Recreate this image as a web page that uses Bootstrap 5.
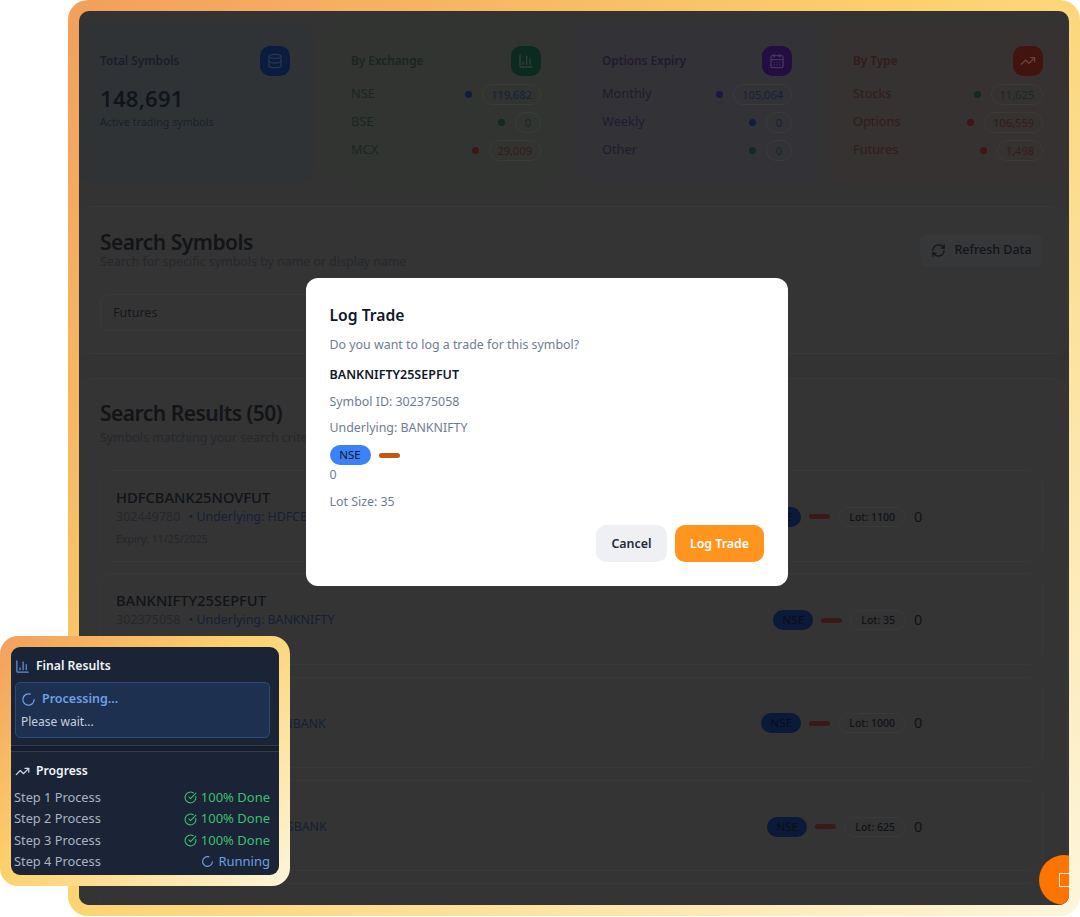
<!DOCTYPE html>
<html lang="en">
<head>
  <meta charset="UTF-8" />
  <meta name="viewport" content="width=device-width, initial-scale=1.0"/>
  <title>Symbols</title>
  <link href="https://cdn.jsdelivr.net/npm/bootstrap@5.3.3/dist/css/bootstrap.min.css" rel="stylesheet">
  <style>
    html, body { height: 917px; overflow: hidden; background: #fff; }
    body { font-family: "Noto Sans", "Liberation Sans", sans-serif; font-size: 14px; position: relative; }
    .ico { fill: none; stroke: currentColor; stroke-width: 2; stroke-linecap: round; stroke-linejoin: round; flex: none; }

    .frame { margin-left: 68px; width: 1012px; height: 916px; padding: 11px; border-radius: 20px;
      background: linear-gradient(135deg, #f29f5c 0%, #fbd26d 45%, #fdf6dc 100%); }
    .screen { position: relative; height: 100%; background: #333; border-radius: 10px; overflow: hidden; }
    .wrap { margin: 12px 1px 0 -3px; }

    .stats { display: grid; grid-template-columns: repeat(4, 238px); gap: 13px; }
    .stat { height: 160px; padding: 23px 24px; border-radius: 16px; }
    .stat-blue { background: #303336; color: #1a1d2c; }
    .stat-green { background: #313431; color: #1b2522; }
    .stat-purple { background: #333236; color: #221a30; }
    .stat-red { background: #353231; color: #331c1b; }
    .stat-title { font-size: 11.8px; font-weight: 600; }
    .stat-icon { width: 30px; height: 30px; border-radius: 10px; }
    .stat-head { height: 30px; margin-bottom: 4px; }
    .total { font-size: 22px; font-weight: 600; line-height: 28px; color: #10151d; margin-top: 8px; letter-spacing: .3px; }
    .total-sub { font-size: 10.7px; line-height: 16px; color: #1a1f2e; margin-top: 2px; }
    .stat-row { height: 28px; font-size: 12.8px; }
    .stat-dot { width: 7px; height: 7px; border-radius: 50%; margin-right: 10px; }
    .stat-pill { min-width: 26px; height: 21px; padding: 0 8px; border: 1px solid rgba(255,255,255,.04); border-radius: 11px;
      font-size: 11px; line-height: 19px; text-align: center; }
    .tone-blue { color: #15203a; }
    .tone-green { color: #152a24; }
    .tone-red { color: #381a19; }
    .dot-blue { background: #101d3c; }
    .dot-green { background: #122a22; }
    .dot-red { background: #3e1614; }
    .dot-purple { background: #241540; }

    .panel-box { border: 1px solid #383838; border-radius: 14px; background: #343434; padding: 23px 24px 23px 23px; }
    .search-box { height: 148px; margin-top: 23px; }
    .results-box { margin-top: 24px; height: 560px; padding-top: 22px; }
    .heading { font-size: 21px; line-height: 24px; font-weight: 600; color: #121418; margin: 0; letter-spacing: -.5px; }
    .sub-heading { font-size: 12.4px; line-height: 14px; color: #25282d; }
    .refresh-btn { height: 33px; width: 123px; margin-top: 4px; border-radius: 8px; background: #363738; color: #111418; font-size: 12.5px; font-weight: 500; }
    .fake-select { width: 320px; height: 37px; margin-top: 25px; padding: 0 12px; border: 1px solid #393939; border-radius: 8px; font-size: 12.5px; line-height: 35px; color: #15181d; }

    .result { height: 91.5px; padding: 16px 119px 16px 15px; margin-bottom: 11.8px; border: 1px solid #383838; border-radius: 12px; }
    .result-name { font-size: 14.7px; line-height: 20px; font-weight: 500; color: #101318; }
    .result-meta { font-size: 12.5px; line-height: 20px; color: #24272c; }
    .result-under { font-size: 12.4px; color: #161f36; margin-left: 5px; }
    .result-expiry { font-size: 10.5px; line-height: 16px; margin-top: 4px; color: #24272c; }
    .result-tags { margin-top: 2px; }
    .nse-dark { height: 20px; width: 40px; border-radius: 10px; background: #0b1a38; color: #0a0d14; font-size: 11.5px; line-height: 20px; text-align: center; }
    .dash-dark { width: 21px; height: 5px; border-radius: 3px; background: #381a18; }
    .lot-pill { height: 20px; padding: 0 10px; border: 1px solid #3a3a3a; border-radius: 10px; font-size: 10.5px; line-height: 18px; font-weight: 500; color: #101318; }
    .zero { font-size: 14.5px; color: #101318; width: 9px; }

    .fab { position: absolute; right: -20px; bottom: 0; width: 50px; height: 50px; border-radius: 50%; background: #ff7300; }
    .fab-square { position: absolute; left: 20px; top: 18px; width: 14px; height: 14px; border: 1.5px solid #ffe9d6; }

    .dialog { position: absolute; left: 227px; top: 267px; width: 482px; height: 308px; padding: 24px 24px 24px 23.5px; background: #fff; border-radius: 12px; }
    .dialog-title { font-size: 15.7px; line-height: 26px; font-weight: 600; color: #0f172a; margin: 0; }
    .dialog-text { font-size: 12.4px; line-height: 20px; color: #6f7d92; }
    .dialog-symbol { font-size: 12.5px; line-height: 20px; font-weight: 600; color: #0f172a; margin-top: 10px; }
    .nse-bright { width: 41px; height: 20px; border-radius: 10px; background: #3b82f6; color: #0f172a; font-size: 11.5px; line-height: 20px; text-align: center; }
    .dash-bright { width: 21px; height: 5px; margin-left: 8px; border-radius: 3px; background: #c2590f; }
    .dialog-btn { height: 37px; border-radius: 10px; font-size: 12.4px; font-weight: 600; line-height: 37px; text-align: center; }
    .dialog-cancel { width: 71px; background: #eef0f3; color: #1e293b; }
    .dialog-log { width: 89px; background: #ff951f; color: #fff; }

    .float-wrap { position: absolute; left: 0; top: 636px; width: 290px; height: 250px; padding: 11px; border-radius: 18px;
      background: linear-gradient(135deg, #f29f5c 0%, #fbd26d 45%, #fdf6dc 100%); }
    .float-panel { height: 228px; padding: 10px 9px 0 3px; border-radius: 9px; background: #1a2436; overflow: hidden; }
    .float-title { font-size: 12.2px; line-height: 18px; font-weight: 600; color: #f1f5f9; }
    .float-box { height: 56px; margin: 7px 0 0 1px; padding: 6px 5px; border: 1px solid #2b4a7d; border-radius: 5px; background: #1e3050; }
    .float-proc { font-size: 12.5px; line-height: 20px; font-weight: 600; color: #6f9fe5; }
    .float-wait { font-size: 12px; line-height: 18px; margin-top: 4px; color: #c5cfdc; }
    .float-rule { height: 7px; margin: 7px -9px 0 -3px; border-top: 1px solid #323c4d; border-bottom: 1px solid #323c4d; background: #161e2d; }
    .float-step { height: 21.4px; font-size: 12.8px; color: #a9b4c2; }
    .step-done { color: #3fbf6f; font-size: 13px; }
    .step-run { color: #6f9fe5; font-size: 13px; }
  </style>
</head>
<body>

  <svg width="0" height="0" class="position-absolute">
    <symbol id="i-db" viewBox="0 0 24 24"><ellipse cx="12" cy="5" rx="9" ry="3"/><path d="M3 5V19A9 3 0 0 0 21 19V5"/><path d="M3 12A9 3 0 0 0 21 12"/></symbol>
    <symbol id="i-chart" viewBox="0 0 24 24"><path d="M3 3v16a2 2 0 0 0 2 2h16"/><path d="M18 17V9"/><path d="M13 17V5"/><path d="M8 17v-3"/></symbol>
    <symbol id="i-cal" viewBox="0 0 24 24"><path d="M8 2v4"/><path d="M16 2v4"/><rect x="3" y="4" width="18" height="18" rx="2"/><path d="M3 10h18"/><path d="M8 14h.01"/><path d="M12 14h.01"/><path d="M16 14h.01"/><path d="M8 18h.01"/><path d="M12 18h.01"/><path d="M16 18h.01"/></symbol>
    <symbol id="i-trend" viewBox="0 0 24 24"><polyline points="22 7 13.5 15.5 8.5 10.5 2 17"/><polyline points="16 7 22 7 22 13"/></symbol>
    <symbol id="i-refresh" viewBox="0 0 24 24"><path d="M3 12a9 9 0 0 1 9-9 9.75 9.75 0 0 1 6.74 2.74L21 8"/><path d="M21 3v5h-5"/><path d="M21 12a9 9 0 0 1-9 9 9.75 9.75 0 0 1-6.74-2.74L3 16"/><path d="M8 16H3v5"/></symbol>
    <symbol id="i-check" viewBox="0 0 24 24"><path d="M21.8 10A10 10 0 1 1 17 3.34"/><path d="m9 11 3 3L22 4"/></symbol>
    <symbol id="i-load" viewBox="0 0 24 24"><path d="M21 12a9 9 0 1 1-6.22-8.56"/></symbol>
  </svg>

  <div class="frame">
    <div class="screen">
      <div class="wrap">

        <div class="stats">
          <div class="stat stat-blue">
            <div class="stat-head d-flex justify-content-between align-items-center">
              <span class="stat-title">Total Symbols</span>
              <span class="stat-icon d-flex align-items-center justify-content-center" style="background:#0b1c3e;color:#26364f"><svg class="ico" width="16" height="16"><use href="#i-db"/></svg></span>
            </div>
            <div class="total">148,691</div>
            <div class="total-sub">Active trading symbols</div>
          </div>

          <div class="stat stat-green">
            <div class="stat-head d-flex justify-content-between align-items-center">
              <span class="stat-title">By Exchange</span>
              <span class="stat-icon d-flex align-items-center justify-content-center" style="background:#0d2a20;color:#29423a"><svg class="ico" width="16" height="16"><use href="#i-chart"/></svg></span>
            </div>
            <div class="stat-row d-flex align-items-center"><span class="me-auto">NSE</span><span class="stat-dot dot-blue"></span><span class="stat-pill tone-blue">119,682</span></div>
            <div class="stat-row d-flex align-items-center"><span class="me-auto">BSE</span><span class="stat-dot dot-green"></span><span class="stat-pill tone-green">0</span></div>
            <div class="stat-row d-flex align-items-center"><span class="me-auto">MCX</span><span class="stat-dot dot-red"></span><span class="stat-pill tone-red">29,009</span></div>
          </div>

          <div class="stat stat-purple">
            <div class="stat-head d-flex justify-content-between align-items-center">
              <span class="stat-title">Options Expiry</span>
              <span class="stat-icon d-flex align-items-center justify-content-center" style="background:#220e40;color:#443560"><svg class="ico" width="16" height="16"><use href="#i-cal"/></svg></span>
            </div>
            <div class="stat-row d-flex align-items-center"><span class="me-auto">Monthly</span><span class="stat-dot dot-purple"></span><span class="stat-pill tone-blue">105,064</span></div>
            <div class="stat-row d-flex align-items-center"><span class="me-auto">Weekly</span><span class="stat-dot dot-blue"></span><span class="stat-pill tone-blue">0</span></div>
            <div class="stat-row d-flex align-items-center"><span class="me-auto">Other</span><span class="stat-dot dot-green"></span><span class="stat-pill tone-green">0</span></div>
          </div>

          <div class="stat stat-red">
            <div class="stat-head d-flex justify-content-between align-items-center">
              <span class="stat-title">By Type</span>
              <span class="stat-icon d-flex align-items-center justify-content-center" style="background:#421410;color:#6a4038"><svg class="ico" width="16" height="16"><use href="#i-trend"/></svg></span>
            </div>
            <div class="stat-row d-flex align-items-center"><span class="me-auto">Stocks</span><span class="stat-dot dot-green"></span><span class="stat-pill tone-green">11,625</span></div>
            <div class="stat-row d-flex align-items-center"><span class="me-auto">Options</span><span class="stat-dot dot-red"></span><span class="stat-pill tone-red">106,559</span></div>
            <div class="stat-row d-flex align-items-center"><span class="me-auto">Futures</span><span class="stat-dot dot-red"></span><span class="stat-pill tone-red">1,498</span></div>
          </div>
        </div>

        <div class="panel-box search-box">
          <div class="d-flex justify-content-between align-items-start">
            <div>
              <h2 class="heading">Search Symbols</h2>
              <div class="sub-heading" style="margin-top:1px">Search for specific symbols by name or display name</div>
            </div>
            <div class="refresh-btn d-flex align-items-center justify-content-center gap-2"><svg class="ico" width="15" height="15"><use href="#i-refresh"/></svg>Refresh Data</div>
          </div>
          <div class="fake-select">Futures</div>
        </div>

        <div class="panel-box results-box">
          <h2 class="heading">Search Results (50)</h2>
          <div class="sub-heading" style="margin:6px 0 25px">Symbols matching your search criteria</div>

          <div class="result d-flex justify-content-between align-items-start">
            <div>
              <div class="result-name">HDFCBANK25NOVFUT</div>
              <div class="result-meta">302449780 <span class="result-under">• Underlying: HDFCBANK</span></div>
              <div class="result-expiry">Expiry: 11/25/2025</div>
            </div>
            <div class="result-tags d-flex align-items-center gap-2 align-self-center">
              <span class="nse-dark">NSE</span><span class="dash-dark"></span><span class="lot-pill">Lot: 1100</span><span class="zero">0</span>
            </div>
          </div>

          <div class="result d-flex justify-content-between align-items-start">
            <div>
              <div class="result-name">BANKNIFTY25SEPFUT</div>
              <div class="result-meta">302375058 <span class="result-under">• Underlying: BANKNIFTY</span></div>
              <div class="result-expiry">Expiry: 09/30/2025</div>
            </div>
            <div class="result-tags d-flex align-items-center gap-2 align-self-center">
              <span class="nse-dark">NSE</span><span class="dash-dark"></span><span class="lot-pill">Lot: 35</span><span class="zero">0</span>
            </div>
          </div>

          <div class="result d-flex justify-content-between align-items-start">
            <div>
              <div class="result-name">CANBANK25NOVFUT</div>
              <div class="result-meta">302449120 <span class="result-under">• Underlying: CANBANK</span></div>
              <div class="result-expiry">Expiry: 11/25/2025</div>
            </div>
            <div class="result-tags d-flex align-items-center gap-2 align-self-center">
              <span class="nse-dark">NSE</span><span class="dash-dark"></span><span class="lot-pill">Lot: 1000</span><span class="zero">0</span>
            </div>
          </div>

          <div class="result d-flex justify-content-between align-items-start">
            <div>
              <div class="result-name">AXISBANK25NOVFUT</div>
              <div class="result-meta">302449204 <span class="result-under">• Underlying: AXISBANK</span></div>
              <div class="result-expiry">Expiry: 11/25/2025</div>
            </div>
            <div class="result-tags d-flex align-items-center gap-2 align-self-center">
              <span class="nse-dark">NSE</span><span class="dash-dark"></span><span class="lot-pill">Lot: 625</span><span class="zero">0</span>
            </div>
          </div>

          <div class="result"></div>
        </div>
      </div>

      <div class="fab"><span class="fab-square"></span></div>

      <div class="dialog d-flex flex-column">
        <h3 class="dialog-title">Log Trade</h3>
        <div class="dialog-text" style="margin-top:7px">Do you want to log a trade for this symbol?</div>
        <div class="dialog-symbol">BANKNIFTY25SEPFUT</div>
        <div class="dialog-text" style="margin-top:7px">Symbol ID: 302375058</div>
        <div class="dialog-text" style="margin-top:6px">Underlying: BANKNIFTY</div>
        <div class="d-flex align-items-center" style="margin-top:7px">
          <span class="nse-bright">NSE</span><span class="dash-bright"></span>
        </div>
        <div class="dialog-text">0</div>
        <div class="dialog-text" style="margin-top:7px">Lot Size: 35</div>
        <div class="d-flex justify-content-end gap-2" style="margin-top:13px">
          <span class="dialog-btn dialog-cancel">Cancel</span>
          <span class="dialog-btn dialog-log">Log Trade</span>
        </div>
      </div>
    </div>
  </div>

  <div class="float-wrap">
    <div class="float-panel">
      <div class="float-title d-flex align-items-center" style="gap:6px"><svg class="ico" width="15" height="15" style="color:#5f8fdc;margin-left:1px"><use href="#i-chart"/></svg>Final Results</div>
      <div class="float-box">
        <div class="float-proc d-flex align-items-center" style="gap:6px"><svg class="ico" width="15" height="15"><use href="#i-load"/></svg>Processing...</div>
        <div class="float-wait">Please wait...</div>
      </div>
      <div class="float-rule"></div>
      <div class="float-title d-flex align-items-center" style="gap:6px;margin-top:10px"><svg class="ico" width="15" height="15" style="color:#cbd5e1;margin-left:1px"><use href="#i-trend"/></svg>Progress</div>
      <div style="margin-top:7px">
        <div class="float-step d-flex justify-content-between align-items-center"><span>Step 1 Process</span><span class="step-done d-flex align-items-center gap-1"><svg class="ico" width="13" height="13"><use href="#i-check"/></svg>100% Done</span></div>
        <div class="float-step d-flex justify-content-between align-items-center"><span>Step 2 Process</span><span class="step-done d-flex align-items-center gap-1"><svg class="ico" width="13" height="13"><use href="#i-check"/></svg>100% Done</span></div>
        <div class="float-step d-flex justify-content-between align-items-center"><span>Step 3 Process</span><span class="step-done d-flex align-items-center gap-1"><svg class="ico" width="13" height="13"><use href="#i-check"/></svg>100% Done</span></div>
        <div class="float-step d-flex justify-content-between align-items-center"><span>Step 4 Process</span><span class="step-run d-flex align-items-center gap-1"><svg class="ico" width="13" height="13"><use href="#i-load"/></svg>Running</span></div>
      </div>
    </div>
  </div>

  <script src="https://cdn.jsdelivr.net/npm/bootstrap@5.3.3/dist/js/bootstrap.bundle.min.js"></script>
</body>
</html>
